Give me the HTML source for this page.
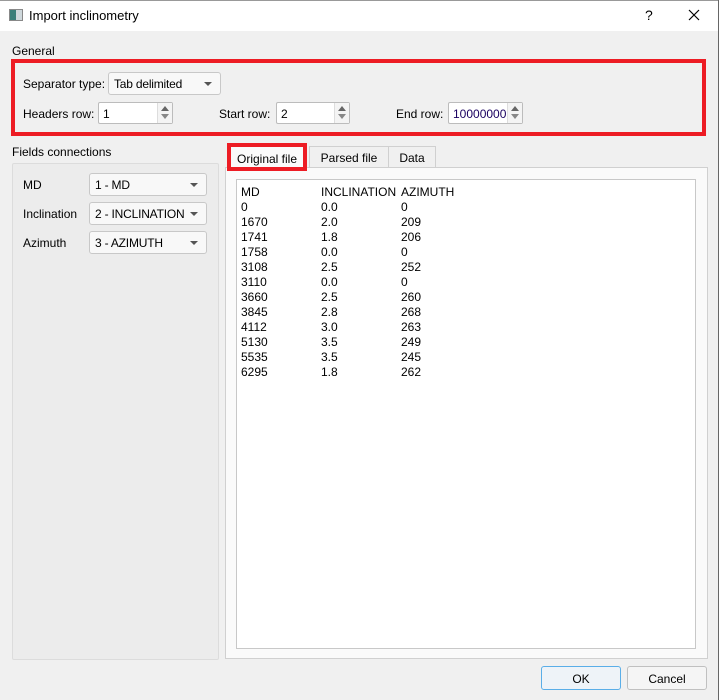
<!DOCTYPE html>
<html><head><style>
*{box-sizing:border-box;margin:0;padding:0}
body{width:719px;height:700px;background:#f0f0f0;font-family:"Liberation Sans",sans-serif;font-size:12px;color:#000;position:relative;overflow:hidden}
.a{position:absolute}
.title{left:0;top:0;width:719px;height:31px;background:#fff;border-top:1px solid #999}
.combo{position:absolute;background:#f8f8f8;border:1px solid #c8c8c8;border-radius:3px;padding:4px 0 0 5px;height:23px;letter-spacing:-0.2px}
.combo:after{content:"";position:absolute;right:8px;top:9px;border-left:4px solid transparent;border-right:4px solid transparent;border-top:4px solid #555}
.spin{position:absolute;background:#fff;border:1px solid #bcbcbc;border-radius:2px;padding:4px 0 0 4px;height:22px}
.spin .b{position:absolute;right:0;top:0;width:15px;height:20px;border-left:1px solid #ddd;background:#f4f4f4}
.spin .b:before{content:"";position:absolute;left:3px;top:3px;border-left:4px solid transparent;border-right:4px solid transparent;border-bottom:5px solid #666}
.spin .b:after{content:"";position:absolute;left:3px;top:11px;border-left:4px solid transparent;border-right:4px solid transparent;border-top:5px solid #888}
.tab{position:absolute;border:1px solid #d0d0d0;border-bottom:none;background:#f0f0f0;text-align:center;padding-top:4px;height:21px}
.btn{position:absolute;border:1px solid #c0c0c0;background:#f5f5f5;border-radius:3px;text-align:center;padding-top:5px;height:24px;width:80px}
.row{position:absolute;left:241px;height:15px}
.row span{position:absolute;white-space:pre}
</style></head><body>
<div class="a title"></div>
<div class="a" style="left:9px;top:9px;width:14px;height:12px;border:1px solid #888;background:linear-gradient(90deg,#3a7f7a 50%,#cfd8dc 50%)"></div>
<div class="a" style="left:29px;top:8px;font-size:13px">Import inclinometry</div>
<div class="a" style="left:645px;top:7px;font-size:14px">?</div>
<svg class="a" style="left:688px;top:9px" width="12" height="12"><path d="M1 1L11 11M11 1L1 11" stroke="#000" stroke-width="1.2"/></svg>
<div class="a" style="right:0;top:0;width:1px;height:700px;background:#666"></div>

<div class="a" style="left:12px;top:44px">General</div>
<div class="a" style="left:11px;top:59px;width:695px;height:77px;border:4px solid #ed1c24"></div>
<div class="a" style="left:23px;top:77px">Separator type:</div>
<div class="combo" style="left:108px;top:72px;width:113px">Tab delimited</div>
<div class="a" style="left:23px;top:107px">Headers row:</div>
<div class="spin" style="left:98px;top:102px;width:75px">1<div class="b"></div></div>
<div class="a" style="left:219px;top:107px">Start row:</div>
<div class="spin" style="left:276px;top:102px;width:74px">2<div class="b"></div></div>
<div class="a" style="left:396px;top:107px">End row:</div>
<div class="spin" style="left:448px;top:102px;width:75px;color:#1a0060">10000000<div class="b"></div></div>

<div class="a" style="left:12px;top:145px">Fields connections</div>
<div class="a" style="left:12px;top:163px;width:207px;height:497px;border:1px solid #dcdcdc;border-radius:2px;background:#ececec"></div>
<div class="a" style="left:23px;top:178px">MD</div>
<div class="combo" style="left:89px;top:173px;width:118px">1 - MD</div>
<div class="a" style="left:23px;top:207px">Inclination</div>
<div class="combo" style="left:89px;top:202px;width:118px">2 - INCLINATION</div>
<div class="a" style="left:23px;top:236px">Azimuth</div>
<div class="combo" style="left:89px;top:231px;width:118px">3 - AZIMUTH</div>

<div class="a" style="left:225px;top:167px;width:483px;height:492px;border:1px solid #d0d0d0;background:#fafafa"></div>
<div class="tab" style="left:309px;top:146px;width:80px">Parsed file</div>
<div class="tab" style="left:388px;top:146px;width:48px">Data</div>
<div class="tab" style="left:227px;top:143px;width:80px;height:28px;background:#fafafa;border:4px solid #ed1c24;padding-top:5px">Original file</div>
<div class="a" style="left:236px;top:179px;width:460px;height:470px;border:1px solid #c8c8c8;background:#fff"></div>
<div class="row" style="top:185px"><span style="left:0">MD</span><span style="left:80px">INCLINATION</span><span style="left:160px">AZIMUTH</span></div>
<div class="row" style="top:200px"><span>0</span><span style="left:80px">0.0</span><span style="left:160px">0</span></div>
<div class="row" style="top:215px"><span>1670</span><span style="left:80px">2.0</span><span style="left:160px">209</span></div>
<div class="row" style="top:230px"><span>1741</span><span style="left:80px">1.8</span><span style="left:160px">206</span></div>
<div class="row" style="top:245px"><span>1758</span><span style="left:80px">0.0</span><span style="left:160px">0</span></div>
<div class="row" style="top:260px"><span>3108</span><span style="left:80px">2.5</span><span style="left:160px">252</span></div>
<div class="row" style="top:275px"><span>3110</span><span style="left:80px">0.0</span><span style="left:160px">0</span></div>
<div class="row" style="top:290px"><span>3660</span><span style="left:80px">2.5</span><span style="left:160px">260</span></div>
<div class="row" style="top:305px"><span>3845</span><span style="left:80px">2.8</span><span style="left:160px">268</span></div>
<div class="row" style="top:320px"><span>4112</span><span style="left:80px">3.0</span><span style="left:160px">263</span></div>
<div class="row" style="top:335px"><span>5130</span><span style="left:80px">3.5</span><span style="left:160px">249</span></div>
<div class="row" style="top:350px"><span>5535</span><span style="left:80px">3.5</span><span style="left:160px">245</span></div>
<div class="row" style="top:365px"><span>6295</span><span style="left:80px">1.8</span><span style="left:160px">262</span></div>

<div class="btn" style="left:541px;top:666px;border-color:#5aaee8;background:#eef3f8">OK</div>
<div class="btn" style="left:627px;top:666px">Cancel</div>
</body></html>
